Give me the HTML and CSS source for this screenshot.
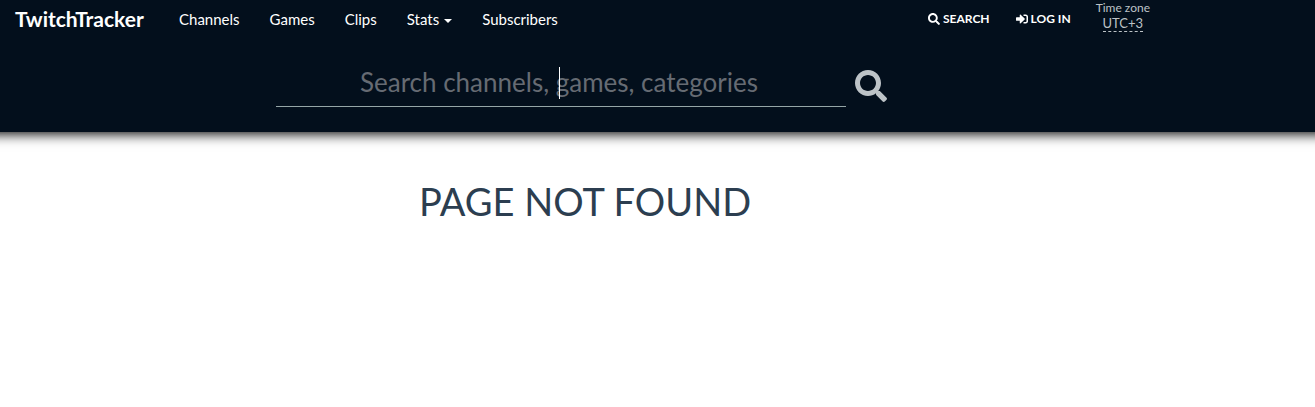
FILE: index.html
```html
<!DOCTYPE html>
<html lang="en">
<head>
<meta charset="utf-8">
<meta name="viewport" content="width=device-width, initial-scale=1">
<title>TwitchTracker</title>
<link rel="stylesheet" href="styles.css">
</head>
<body>
<svg class="sprite" aria-hidden="true">
  <symbol id="icon-search" viewBox="0 0 512 512"><path d="M505 442.700L405.300 343c-4.500-4.500-10.600-7-17-7H372c27.600-35.300 44-79.700 44-128C416 93.100 322.900 0 208 0S0 93.100 0 208s93.100 208 208 208c48.300 0 92.700-16.400 128-44v16.300c0 6.400 2.500 12.500 7 17l99.700 99.700c9.400 9.400 24.600 9.400 33.900 0l28.300-28.300c9.400-9.400 9.400-24.600.1-34zM208 336c-70.700 0-128-57.200-128-128 0-70.700 57.200-128 128-128 70.700 0 128 57.200 128 128 0 70.700-57.200 128-128 128z"/></symbol>
  <symbol id="icon-login" viewBox="0 0 512 512"><path d="M416 448h-84c-6.600 0-12-5.400-12-12v-40c0-6.600 5.400-12 12-12h84c17.700 0 32-14.300 32-32V160c0-17.700-14.300-32-32-32h-84c-6.600 0-12-5.400-12-12V76c0-6.600 5.400-12 12-12h84c53 0 96 43 96 96v192c0 53-43 96-96 96zm-47-209L201 71c-15-15-41-4.500-41 17v96H24c-13.300 0-24 10.700-24 24v96c0 13.300 10.700 24 24 24h136v96c0 21.500 26 32 41 17l168-168c9.300-9.400 9.300-24.600 0-34z"/></symbol>
</svg>
<header class="header">
  <nav class="navbar container">
    <a class="brand" href="#">TwitchTracker</a>
    <div class="menu">
      <a href="#">Channels</a>
      <a href="#">Games</a>
      <a href="#">Clips</a>
      <a href="#">Stats<span class="arrow"></span></a>
      <a href="#">Subscribers</a>
    </div>
    <div class="tools">
      <a href="#"><svg class="icon"><use href="#icon-search"/></svg>SEARCH</a>
      <a href="#"><svg class="icon"><use href="#icon-login"/></svg>LOG IN</a>
    </div>
    <div class="timezone">
      <span>Time zone</span>
      <a href="#">UTC+3</a>
    </div>
  </nav>
  <form class="search container">
    <div class="field">
      <input type="text" aria-label="Search" placeholder="Search channels, games, categories">
      <span class="cursor"></span>
    </div>
    <button type="button" aria-label="Search"><svg><use href="#icon-search"/></svg></button>
  </form>
</header>
<main class="container">
  <h1>PAGE NOT FOUND</h1>
</main>
</body>
</html>
```
FILE: styles.css
```css
* { box-sizing: border-box; }
body {
  margin: 0;
  background: #fff;
  color: #2c3e50;
  font: 15px/20px Lato, sans-serif;
}
a { color: #fff; text-decoration: none; }
svg { fill: currentColor; }
.sprite { display: none; }
.container {
  max-width: 1170px;
  padding: 0 15px;
}
.header {
  background: #030f1c;
  box-shadow: 0 -18px 12px 20px #000;
  padding-bottom: 25px;
}
.navbar {
  display: flex;
  align-items: center;
  height: 38px;
}
.brand {
  min-width: 134px;
  font-size: 21px;
  font-weight: 700;
}
.menu {
  display: flex;
  gap: 30px;
  margin-left: 30px;
}
.arrow {
  display: inline-block;
  margin-left: 5px;
  vertical-align: middle;
  border: 4px solid transparent;
  border-top-color: #fff;
  border-bottom: 0;
}
.tools {
  display: flex;
  gap: 26px;
  margin-left: auto;
  font-size: 12px;
  font-weight: 700;
}
.tools a {
  display: flex;
  align-items: center;
  gap: 3px;
}
.icon { width: 12px; height: 12px; }
.timezone {
  display: flex;
  flex-direction: column;
  align-items: center;
  align-self: flex-start;
  margin-left: 25px;
  padding-right: 5px;
  color: #bdc3c7;
  font-size: 12px;
  line-height: 15px;
}
.timezone a {
  color: #bdc3c7;
  font-size: 13px;
  line-height: 16px;
  border-bottom: 1px dashed #bdc3c7;
}
.search {
  display: flex;
  justify-content: center;
  align-items: center;
  gap: 9px;
  padding-top: 22px;
}
.field {
  position: relative;
  flex: 0 1 570px;
}
.field input {
  display: block;
  width: 100%;
  height: 47px;
  padding: 0 4px 2px 0;
  border: 0;
  border-bottom: 1px solid #95a5a6;
  background: transparent;
  color: #fff;
  font: 26px Lato, sans-serif;
  text-align: center;
  outline: 0;
}
.field input::placeholder { color: #666b73; opacity: 1; }
.cursor {
  position: absolute;
  top: 7px;
  left: calc(50% - 2px);
  width: 1px;
  height: 32px;
  background: #fff;
}
.search button {
  width: 39px;
  padding: 5px 0 0;
  border: 0;
  background: none;
  color: #bdc3c7;
  text-align: left;
}
.search button svg { display: block; width: 32px; height: 32px; }
h1 {
  margin: 44px 0 0;
  font-size: 38px;
  font-weight: 400;
  line-height: 50px;
  text-align: center;
}
```
